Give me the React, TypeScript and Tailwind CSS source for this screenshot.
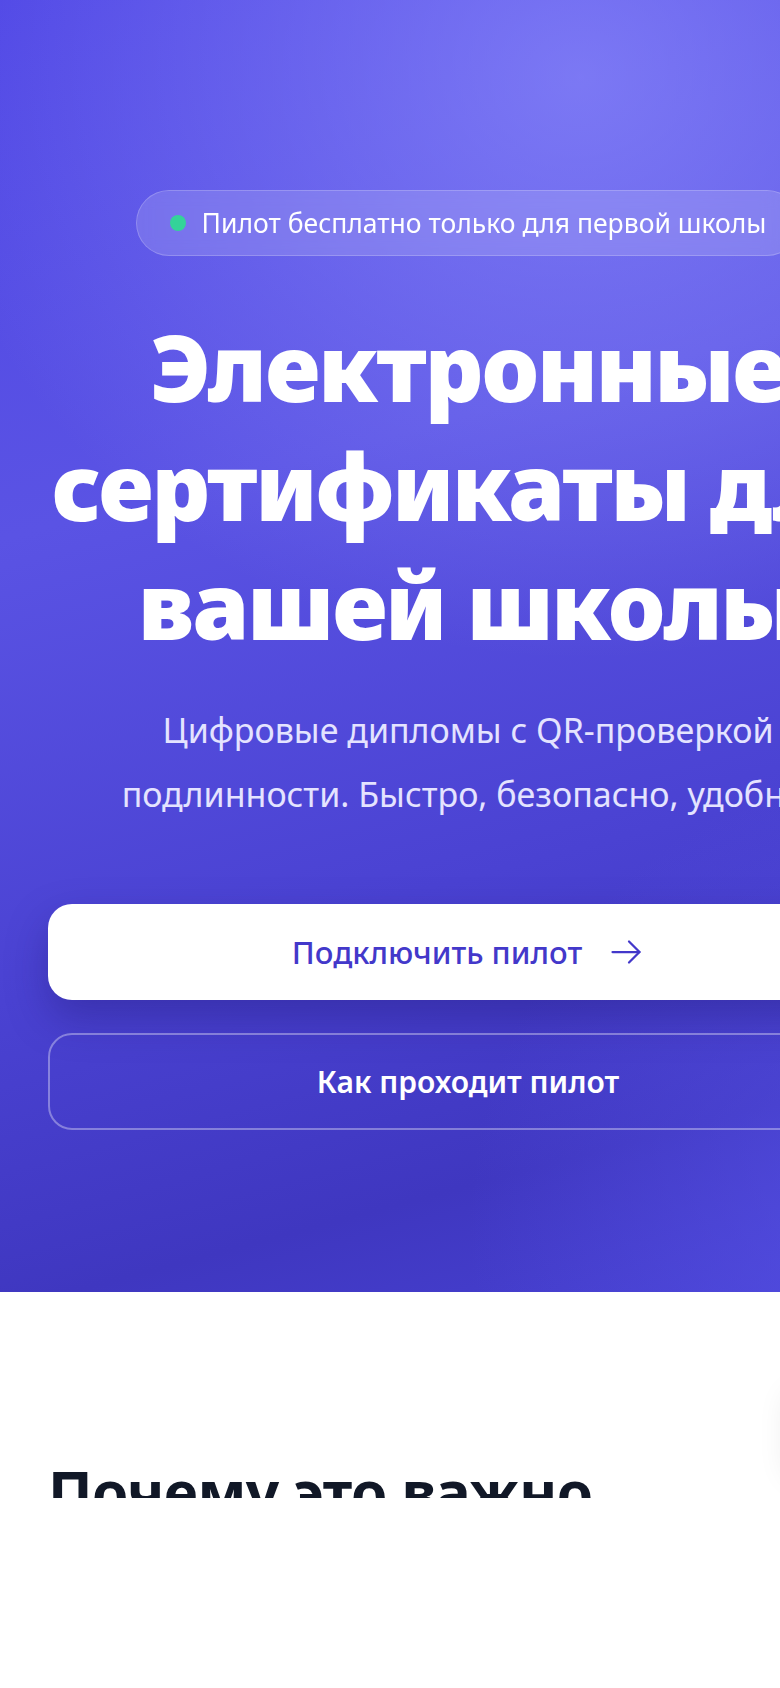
const font = { fontFamily: '"Noto Sans", "Open Sans", Arial, sans-serif' }

function ArrowIcon() {
  return (
    <svg className="h-9 w-9" viewBox="0 0 24 24" fill="none" stroke="currentColor" strokeWidth={1.5} strokeLinecap="round" strokeLinejoin="round">
      <path d="M3 12h18" />
      <path d="m14 5 7 7-7 7" />
    </svg>
  )
}

function PilotBadge() {
  return (
    <div className="inline-flex items-center gap-4 whitespace-nowrap rounded-full border border-white/20 bg-white/15 px-[33px] py-[13px] text-[26.5px] leading-[38px] text-white backdrop-blur">
      <span className="h-4 w-4 rounded-full bg-[#34d399]" />
      <span>Пилот бесплатно только для первой школы</span>
    </div>
  )
}

function Hero() {
  return (
    <section className="relative overflow-hidden bg-[linear-gradient(165deg,#4f46e5_0%,#5a53e4_35%,#4a42d2_65%,#3f37c0_85%,#4842d4_100%)] px-12 pb-[162px] pt-[190px]">
      <div className="absolute inset-0 bg-[radial-gradient(ellipse_70%_45%_at_62%_6%,rgba(150,150,255,0.6),transparent_100%)]" />
      <div className="absolute inset-0 bg-[radial-gradient(ellipse_45%_35%_at_95%_95%,rgba(90,85,235,0.6),transparent_100%)]" />

      <div className="relative flex flex-col items-center text-center">
        <PilotBadge />

        <h1 className="mt-[51px] whitespace-nowrap text-[92px] font-black leading-[119px] tracking-[-0.024em] text-white">
          <span className="block">Электронные</span>
          <span className="block">сертификаты для</span>
          <span className="block">вашей школы</span>
        </h1>

        <p className="mt-[34px] whitespace-nowrap text-[34px] font-normal leading-[64px] text-[#e4e3ff]">
          <span className="block">Цифровые дипломы с QR-проверкой</span>
          <span className="block">подлинности. Быстро, безопасно, удобно.</span>
        </p>

        <div className="mt-[78px] flex w-full flex-col gap-[33px]">
          <button className="flex h-24 w-full items-center justify-center gap-[26px] rounded-3xl bg-white text-[31px] font-medium text-[#4338ca] shadow-[0_18px_40px_rgba(30,20,110,0.35)]">
            Подключить пилот
            <ArrowIcon />
          </button>
          <button className="flex h-[97px] w-full items-center justify-center rounded-3xl border-2 border-white/35 text-[30px] font-semibold text-white">
            Как проходит пилот
          </button>
        </div>
      </div>
    </section>
  )
}

function WhySection() {
  return (
    <section className="relative px-12 pt-[164px]">
      <div className="absolute left-[786px] top-[90px] h-[90px] w-[130px] rounded-2xl bg-white shadow-[0_8px_30px_rgba(0,0,0,0.08)]" />
      <div className="h-[42px] overflow-hidden">
        <h2 className="whitespace-nowrap text-[58.5px] font-bold leading-[70px] tracking-[-0.01em] text-[#111827]">Почему это важно</h2>
      </div>
    </section>
  )
}

export default function App() {
  return (
    <div className="h-[1688px] w-[780px] overflow-hidden bg-white" style={font}>
      <div className="w-[936px]">
        <Hero />
        <WhySection />
      </div>
    </div>
  )
}
